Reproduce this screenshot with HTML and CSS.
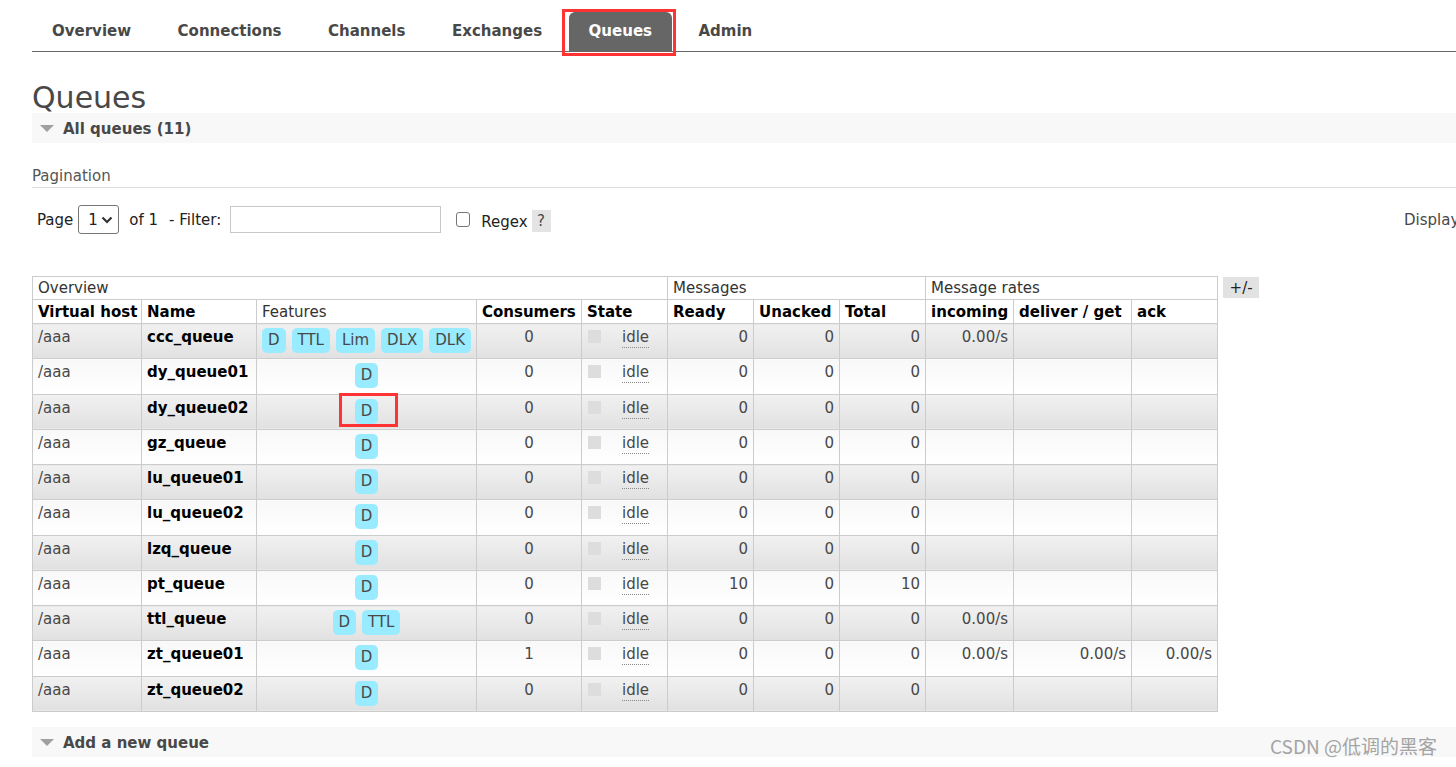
FILE: index.html
```html
<!DOCTYPE html>
<html>
<head>
<meta charset="utf-8">
<title>Queues</title>
<link rel="stylesheet" href="styles.css">
</head>
<body>
<div class="page">
  <ul class="tabs">
    <li><a>Overview</a></li>
    <li><a>Connections</a></li>
    <li><a>Channels</a></li>
    <li><a>Exchanges</a></li>
    <li class="active"><a>Queues</a></li>
    <li><a>Admin</a></li>
  </ul>

  <h1>Queues</h1>

  <div class="section-h"><span class="tri"></span>All queues (11)</div>

  <div class="pagination">
    <h3>Pagination</h3>
    <div class="pg-row">
      <div class="pg-left">
        <span class="lbl">Page</span>
        <span class="fake-select"><span>1</span><svg width="12" height="8" viewBox="0 0 12 8"><path d="M1.5 1.5 L6 6 L10.5 1.5" fill="none" stroke="#333" stroke-width="2.2"/></svg></span>
        <span class="of">of 1</span>
        <span class="flt">- Filter:</span>
        <input class="filter" type="text">
        <input class="chk" type="checkbox">
        <span class="regex">Regex</span>
        <span class="help">?</span>
      </div>
      <div class="pg-right">Displaying 11 items , page size up to:</div>
    </div>
  </div>

  <div class="table-wrap">
    <table class="list">
      <colgroup>
        <col class="w-vhost"><col class="w-name"><col class="w-feat"><col class="w-cons"><col class="w-state">
        <col class="w-num"><col class="w-num"><col class="w-num">
        <col class="w-inc"><col class="w-del"><col class="w-ack">
      </colgroup>
      <thead>
        <tr class="group">
          <th colspan="5">Overview</th>
          <th colspan="3">Messages</th>
          <th colspan="3">Message rates</th>
        </tr>
        <tr class="heads">
          <th>Virtual host</th><th>Name</th><th class="light">Features</th><th>Consumers</th><th>State</th>
          <th>Ready</th><th>Unacked</th><th>Total</th>
          <th>incoming</th><th>deliver / get</th><th>ack</th>
        </tr>
      </thead>
      <tbody>
        <tr class="alt1">
          <td>/aaa</td><td class="qname">ccc_queue</td>
          <td class="feat"><span class="badge">D</span><span class="badge">TTL</span><span class="badge">Lim</span><span class="badge">DLX</span><span class="badge">DLK</span></td>
          <td class="c">0</td><td class="state"><span class="sq"></span><abbr>idle</abbr></td>
          <td class="r">0</td><td class="r">0</td><td class="r">0</td>
          <td class="r">0.00/s</td><td class="r"></td><td class="r"></td>
        </tr>
        <tr class="alt2">
          <td>/aaa</td><td class="qname">dy_queue01</td>
          <td class="feat"><span class="badge">D</span></td>
          <td class="c">0</td><td class="state"><span class="sq"></span><abbr>idle</abbr></td>
          <td class="r">0</td><td class="r">0</td><td class="r">0</td>
          <td class="r"></td><td class="r"></td><td class="r"></td>
        </tr>
        <tr class="alt1">
          <td>/aaa</td><td class="qname">dy_queue02</td>
          <td class="feat"><span class="badge">D</span></td>
          <td class="c">0</td><td class="state"><span class="sq"></span><abbr>idle</abbr></td>
          <td class="r">0</td><td class="r">0</td><td class="r">0</td>
          <td class="r"></td><td class="r"></td><td class="r"></td>
        </tr>
        <tr class="alt2">
          <td>/aaa</td><td class="qname">gz_queue</td>
          <td class="feat"><span class="badge">D</span></td>
          <td class="c">0</td><td class="state"><span class="sq"></span><abbr>idle</abbr></td>
          <td class="r">0</td><td class="r">0</td><td class="r">0</td>
          <td class="r"></td><td class="r"></td><td class="r"></td>
        </tr>
        <tr class="alt1">
          <td>/aaa</td><td class="qname">lu_queue01</td>
          <td class="feat"><span class="badge">D</span></td>
          <td class="c">0</td><td class="state"><span class="sq"></span><abbr>idle</abbr></td>
          <td class="r">0</td><td class="r">0</td><td class="r">0</td>
          <td class="r"></td><td class="r"></td><td class="r"></td>
        </tr>
        <tr class="alt2">
          <td>/aaa</td><td class="qname">lu_queue02</td>
          <td class="feat"><span class="badge">D</span></td>
          <td class="c">0</td><td class="state"><span class="sq"></span><abbr>idle</abbr></td>
          <td class="r">0</td><td class="r">0</td><td class="r">0</td>
          <td class="r"></td><td class="r"></td><td class="r"></td>
        </tr>
        <tr class="alt1">
          <td>/aaa</td><td class="qname">lzq_queue</td>
          <td class="feat"><span class="badge">D</span></td>
          <td class="c">0</td><td class="state"><span class="sq"></span><abbr>idle</abbr></td>
          <td class="r">0</td><td class="r">0</td><td class="r">0</td>
          <td class="r"></td><td class="r"></td><td class="r"></td>
        </tr>
        <tr class="alt2">
          <td>/aaa</td><td class="qname">pt_queue</td>
          <td class="feat"><span class="badge">D</span></td>
          <td class="c">0</td><td class="state"><span class="sq"></span><abbr>idle</abbr></td>
          <td class="r">10</td><td class="r">0</td><td class="r">10</td>
          <td class="r"></td><td class="r"></td><td class="r"></td>
        </tr>
        <tr class="alt1">
          <td>/aaa</td><td class="qname">ttl_queue</td>
          <td class="feat"><span class="badge">D</span><span class="badge">TTL</span></td>
          <td class="c">0</td><td class="state"><span class="sq"></span><abbr>idle</abbr></td>
          <td class="r">0</td><td class="r">0</td><td class="r">0</td>
          <td class="r">0.00/s</td><td class="r"></td><td class="r"></td>
        </tr>
        <tr class="alt2">
          <td>/aaa</td><td class="qname">zt_queue01</td>
          <td class="feat"><span class="badge">D</span></td>
          <td class="c">1</td><td class="state"><span class="sq"></span><abbr>idle</abbr></td>
          <td class="r">0</td><td class="r">0</td><td class="r">0</td>
          <td class="r">0.00/s</td><td class="r">0.00/s</td><td class="r">0.00/s</td>
        </tr>
        <tr class="alt1">
          <td>/aaa</td><td class="qname">zt_queue02</td>
          <td class="feat"><span class="badge">D</span></td>
          <td class="c">0</td><td class="state"><span class="sq"></span><abbr>idle</abbr></td>
          <td class="r">0</td><td class="r">0</td><td class="r">0</td>
          <td class="r"></td><td class="r"></td><td class="r"></td>
        </tr>
      </tbody>
    </table>
    <span class="toggle">+/-</span>
  </div>

  <div class="section-h add"><span class="tri"></span>Add a new queue</div>

  <div class="mark mark-tab"></div>
  <div class="mark mark-badge"></div>
  <div class="watermark">CSDN @低调的黑客</div>
</div>
</body>
</html>
```

FILE: styles.css
```css
html, body {
  margin: 0;
  padding: 0;
  overflow: hidden;
  background: #fff;
}

body {
  font-family: "DejaVu Sans", Verdana, sans-serif;
  font-size: 15px;
  line-height: 18px;
  color: #484848;
}

.page {
  position: relative;
  width: 1568px;
  height: 767px;
  padding: 12px 0 0 32px;
  box-sizing: border-box;
}

/* tabs */
.tabs {
  list-style: none;
  margin: 0;
  padding: 0;
  display: flex;
  gap: 6.5px;
  border-bottom: 1px solid #666;
}

.tabs a {
  display: block;
  padding: 0 20px;
  line-height: 39px;
  font-weight: bold;
  color: #484848;
  border-radius: 6px 6px 0 0;
}

.tabs .active a {
  background: #666;
  color: #fff;
}

h1 {
  margin: 30px 0 0;
  font-size: 30px;
  line-height: 31px;
  font-weight: normal;
  color: #484848;
}

/* section headers */
.section-h {
  display: flex;
  align-items: center;
  height: 30px;
  background: #f8f8f8;
  padding-left: 8px;
  padding-top: 1px;
  box-sizing: border-box;
  font-weight: bold;
  color: #484848;
}

.section-h .tri {
  width: 0;
  height: 0;
  border-left: 7px solid transparent;
  border-right: 7px solid transparent;
  border-top: 7px solid #a0a0a0;
  margin-right: 9px;
}

.section-h.add {
  margin-top: 15px;
  padding-top: 2px;
}

/* pagination */
.pagination h3 {
  margin: 24px 0 0;
  padding-bottom: 2px;
  font-size: 15px;
  line-height: 18px;
  font-weight: normal;
  color: #555;
  border-bottom: 1px solid #ddd;
}

.pg-row {
  display: flex;
  align-items: center;
  height: 29px;
  margin-top: 17px;
  color: #222;
}

.pg-left {
  display: flex;
  align-items: center;
  flex: none;
  width: 1372px;
  padding-left: 5px;
  box-sizing: border-box;
}

.fake-select {
  display: flex;
  align-items: center;
  justify-content: space-between;
  box-sizing: border-box;
  width: 41px;
  height: 29px;
  margin-left: 5px;
  padding: 0 5px 0 9px;
  border: 1px solid #767676;
  border-radius: 3px;
  background: #fff;
}

.of {
  margin-left: 10px;
}

.flt {
  margin-left: 11px;
}

.filter {
  box-sizing: border-box;
  width: 211px;
  height: 27px;
  margin: 0 0 0 9px;
  border: 1px solid #c8c8c8;
  padding: 0 4px;
  font: inherit;
}

.chk {
  appearance: none;
  box-sizing: border-box;
  width: 14px;
  height: 15px;
  margin: 0 0 0 15px;
  border: 1px solid #767676;
  border-radius: 3px;
  background: #fff;
}

.regex {
  margin-left: 11px;
  padding-top: 5px;
}

.help {
  display: flex;
  align-items: center;
  justify-content: center;
  width: 19px;
  height: 22px;
  margin: 3px 0 0 4px;
  background: #e4e4e4;
  color: #484848;
}

.pg-right {
  white-space: nowrap;
  color: #484848;
}

/* table */
.table-wrap {
  display: flex;
  align-items: flex-start;
  gap: 5px;
  margin-top: 42px;
}

.list {
  border-collapse: collapse;
  table-layout: fixed;
  width: 1185px;
  flex: none;
}

.w-vhost { width: 109px; }
.w-name { width: 115px; }
.w-feat { width: 220px; }
.w-cons { width: 105px; }
.w-state { width: 86px; }
.w-num { width: 86px; }
.w-inc { width: 88px; }
.w-del { width: 118px; }
.w-ack { width: 86px; }

.list th,
.list td {
  border: 1px solid #ccc;
  padding-left: 5px;
  padding-right: 5px;
  text-align: left;
  white-space: nowrap;
  overflow: hidden;
}

.list .group th {
  font-weight: normal;
  color: #333;
  padding-top: 2px;
  padding-bottom: 2px;
  background: #fff;
}

.list .heads th {
  font-weight: bold;
  color: #000;
  padding-top: 3px;
  padding-bottom: 2px;
  background: #fff;
}

.list .heads th.light {
  font-weight: normal;
  color: #333;
}

.list tbody tr {
  height: 35.27px;
}

.list tbody td {
  vertical-align: top;
  padding-top: 4px;
  padding-bottom: 0;
  color: #484848;
}

.list .alt1 td {
  background: linear-gradient(to bottom, #f1f1f1 0%, #e1e1e1 100%);
}

.list .alt2 td {
  background: linear-gradient(to bottom, #f8f8f8 0%, #ffffff 100%);
}

.list tbody td.qname {
  font-weight: bold;
  color: #000;
}

.list tbody td.c { text-align: center; }
.list tbody td.r { text-align: right; }

.list tbody td.feat {
  text-align: center;
  padding-top: 4px;
  padding-left: 4px;
  padding-right: 4px;
}

.badge {
  display: inline-block;
  vertical-align: top;
  padding: 3px 6px 4px;
  margin: 0 3px;
  border-radius: 5px;
  background: #99ebff;
  color: #484848;
}

.badge:first-child { margin-left: 0; }
.badge:last-child { margin-right: 0; }

.list tbody td.state {
  padding-left: 6px;
}

.sq {
  display: inline-block;
  vertical-align: top;
  width: 13px;
  height: 13px;
  margin-top: 2px;
  margin-right: 21px;
  background: #ddd;
}

abbr {
  text-decoration: none;
  border-bottom: 1px dotted #888;
  padding-bottom: 1px;
}

.toggle {
  display: flex;
  align-items: center;
  justify-content: center;
  width: 36px;
  height: 21px;
  margin-top: 1px;
  background: #e2e2e2;
  color: #222;
}

/* annotations */
.mark {
  position: absolute;
  box-sizing: border-box;
  border: 3px solid #f33;
}

.mark-tab {
  left: 562px;
  top: 9px;
  width: 114px;
  height: 47px;
}

.mark-badge {
  left: 339px;
  top: 393px;
  width: 59px;
  height: 34px;
}

.watermark {
  position: absolute;
  left: 1270px;
  top: 734px;
  font-family: "Noto Sans CJK SC", "DejaVu Sans", sans-serif;
  font-size: 19px;
  line-height: 24px;
  color: #a4a4a4;
  white-space: nowrap;
}
```
